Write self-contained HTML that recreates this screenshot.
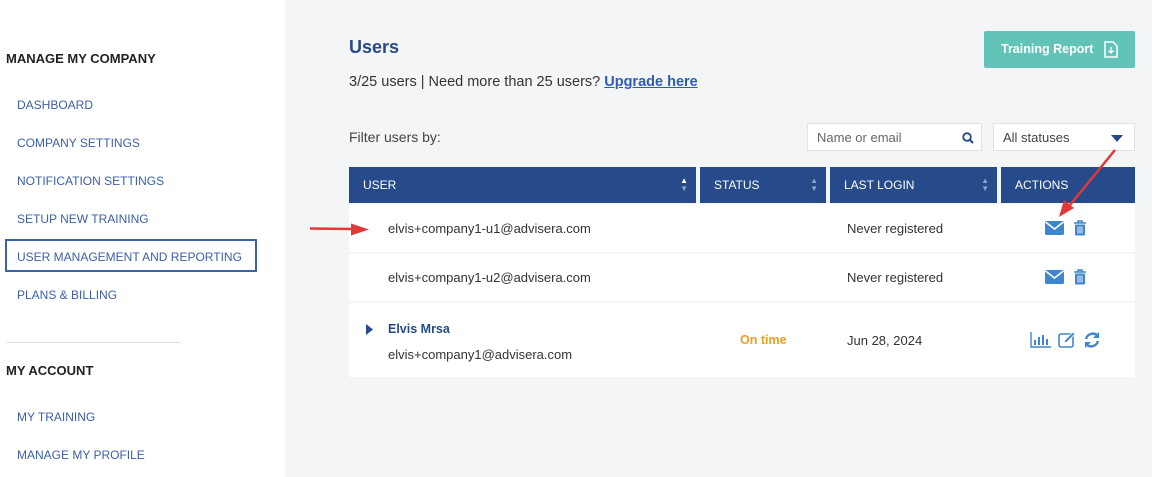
<!DOCTYPE html>
<html><head><style>
*{margin:0;padding:0;box-sizing:border-box}
body{width:1152px;height:477px;overflow:hidden;background:#f4f5f6;font-family:"Liberation Sans",sans-serif;position:relative}
.side{position:absolute;left:0;top:0;width:285px;height:477px;background:#fff}
.h{position:absolute;left:6px;font-weight:bold;font-size:13px;color:#222}
.l{position:absolute;left:17px;font-size:12px;color:#3b5fa8}
.a{position:absolute;font-size:13px;color:#333}
.th{position:absolute;top:167px;height:36px;background:#264a8a;color:#fff;font-size:12px;line-height:36px;padding-left:14px}
.sort{position:absolute;right:8px;top:10px;font-size:8px;line-height:8px;color:#8ea3c8}
</style></head><body>
<div class="side">
<div class="h" style="top:51px">MANAGE MY COMPANY</div>
<div class="l" style="top:98px">DASHBOARD</div>
<div class="l" style="top:136px">COMPANY SETTINGS</div>
<div class="l" style="top:174px">NOTIFICATION SETTINGS</div>
<div class="l" style="top:212px">SETUP NEW TRAINING</div>
<div style="position:absolute;left:5px;top:239px;width:252px;height:33px;border:2px solid #3b62ad"></div>
<div class="l" style="top:250px">USER MANAGEMENT AND REPORTING</div>
<div class="l" style="top:288px">PLANS &amp; BILLING</div>
<div style="position:absolute;left:6px;top:342px;width:174px;border-top:1px solid #ddd"></div>
<div class="h" style="top:363px">MY ACCOUNT</div>
<div class="l" style="top:410px">MY TRAINING</div>
<div class="l" style="top:448px">MANAGE MY PROFILE</div>
</div>
<div style="position:absolute;left:349px;top:37px;font-size:18px;font-weight:bold;color:#264a8a">Users</div>
<div style="position:absolute;left:349px;top:74px;font-size:14.5px;color:#333">3/25 users | Need more than 25 users? <span style="color:#2d5bbd;font-weight:bold;text-decoration:underline">Upgrade here</span></div>
<div style="position:absolute;left:984px;top:31px;width:151px;height:37px;background:#62c4b9;border-radius:2px;color:#fff;font-weight:bold;font-size:12.5px;line-height:37px;padding-left:17px">Training Report
<svg style="position:absolute;left:120px;top:10px" width="14" height="17" viewBox="0 0 14 17"><path d="M1 1h8l4 4v11H1z" fill="none" stroke="#fff" stroke-width="1.5"/><path d="M7 6v6M4.5 9.5L7 12l2.5-2.5" fill="none" stroke="#fff" stroke-width="1.3"/></svg></div>
<div style="position:absolute;left:349px;top:129px;font-size:14px;color:#444">Filter users by:</div>
<div style="position:absolute;left:807px;top:123px;width:175px;height:28px;background:#fff;border:1px solid #e2e2e2;font-size:13px;color:#666;padding:6px 9px">Name or email
<svg style="position:absolute;right:7px;top:8px" width="12" height="12" viewBox="0 0 12 12"><circle cx="5" cy="5" r="3.8" fill="none" stroke="#264a8a" stroke-width="1.8"/><path d="M8 8l3 3" stroke="#264a8a" stroke-width="2"/></svg></div>
<div style="position:absolute;left:993px;top:123px;width:142px;height:28px;background:#fff;border:1px solid #e2e2e2;font-size:13px;color:#444;padding:6px 9px">All statuses
<svg style="position:absolute;right:11px;top:11px" width="12" height="7"><path d="M0 0h12L6 7z" fill="#264a8a"/></svg></div>
<div class="th" style="left:349px;width:347px">USER<div class="sort" style="color:#fff">▲<br><span style="color:#8ea3c8">▼</span></div></div>
<div class="th" style="left:700px;width:126px">STATUS<div class="sort">▲<br>▼</div></div>
<div class="th" style="left:830px;width:167px">LAST LOGIN<div class="sort">▲<br>▼</div></div>
<div class="th" style="left:1001px;width:134px">ACTIONS</div>
<div style="position:absolute;left:349px;top:204px;width:786px;height:48px;background:#fff"></div>
<div style="position:absolute;left:349px;top:254px;width:786px;height:47px;background:#fff"></div>
<div style="position:absolute;left:349px;top:303px;width:786px;height:74px;background:#fff"></div>
<div class="a" style="left:388px;top:221px">elvis+company1-u1@advisera.com</div>
<div class="a" style="left:847px;top:221px">Never registered</div>
<div class="a" style="left:388px;top:270px">elvis+company1-u2@advisera.com</div>
<div class="a" style="left:847px;top:270px">Never registered</div>
<svg style="position:absolute;left:366px;top:324px" width="8" height="11"><path d="M0 0l7 5.5L0 11z" fill="#264a8a"/></svg>
<div class="a" style="left:388px;top:322px;font-weight:bold;color:#264a8a;font-size:12.5px">Elvis Mrsa</div>
<div class="a" style="left:388px;top:347px">elvis+company1@advisera.com</div>
<div class="a" style="left:740px;top:333px;color:#e8a020;font-weight:bold;font-size:12.5px">On time</div>
<div class="a" style="left:847px;top:333px">Jun 28, 2024</div>
<svg style="position:absolute;left:1045px;top:220px" width="45" height="16"><rect x="0" y="1" width="19" height="14" rx="1.5" fill="#3f86d0"/><path d="M0.5 2l9 7 9-7" fill="none" stroke="#fff" stroke-width="1.6"/><path d="M29 3h12M33 3V1h4v2" stroke="#3f86d0" stroke-width="1.6" fill="none"/><rect x="30" y="4.5" width="10" height="11" rx="1" fill="#3f86d0"/><path d="M33 6.5v7M35 6.5v7M37 6.5v7" stroke="#fff" stroke-width="0.9"/></svg>
<svg style="position:absolute;left:1045px;top:269px" width="45" height="16"><rect x="0" y="1" width="19" height="14" rx="1.5" fill="#3f86d0"/><path d="M0.5 2l9 7 9-7" fill="none" stroke="#fff" stroke-width="1.6"/><path d="M29 3h12M33 3V1h4v2" stroke="#3f86d0" stroke-width="1.6" fill="none"/><rect x="30" y="4.5" width="10" height="11" rx="1" fill="#3f86d0"/><path d="M33 6.5v7M35 6.5v7M37 6.5v7" stroke="#fff" stroke-width="0.9"/></svg>
<svg style="position:absolute;left:1030px;top:331px" width="72" height="18" fill="none" stroke="#3f86d0"><path d="M1 1v15h20" stroke-width="1.4"/><path d="M5 14V9M9 14V6M13 14V4M17 14V8" stroke-width="2"/><rect x="29" y="3" width="14" height="13" rx="2" stroke-width="1.6"/><path d="M34 12l1-3 8-8 2 2-8 8z" fill="#3f86d0" stroke="#fff" stroke-width="0.8"/><path d="M56 8a7 7 0 0 1 12-3M68 10a7 7 0 0 1-12 3" stroke-width="2.4"/><path d="M69 1v6h-6zM55 17v-6h6z" fill="#3f86d0" stroke="none"/></svg>
<svg style="position:absolute;left:0;top:0" width="1152" height="477"><path d="M310 228.5L352 229" stroke="#e0393a" stroke-width="2.5"/><path d="M369 229.5l-18-6v12z" fill="#e0393a"/><path d="M1115 150L1070 205" stroke="#e0393a" stroke-width="2.5"/><path d="M1059 217l5-17 10 8z" fill="#e0393a"/></svg>
</body></html>
